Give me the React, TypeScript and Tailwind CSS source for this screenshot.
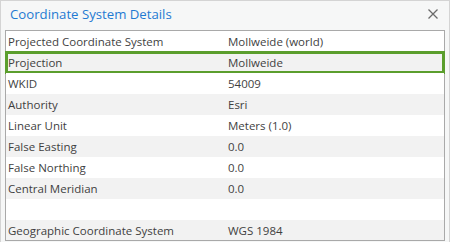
import React from 'react';

const rows: [string, string][] = [
  ['Projected Coordinate System', 'Mollweide (world)'],
  ['Projection', 'Mollweide'],
  ['WKID', '54009'],
  ['Authority', 'Esri'],
  ['Linear Unit', 'Meters (1.0)'],
  ['False Easting', '0.0'],
  ['False Northing', '0.0'],
  ['Central Meridian', '0.0'],
  ['', ''],
  ['Geographic Coordinate System', 'WGS 1984'],
];

export default function App() {
  return (
    <div className="w-[450px] h-[242px] overflow-hidden bg-[#f6f7f7] border-l border-r border-t border-[#d4d4d4] flex flex-col" style={{ fontFamily: '"Open Sans", "Noto Sans", sans-serif' }}>
      {/* Title bar */}
      <div className="h-[29px] flex items-center justify-between pl-[9px] pr-[11px]">
        <span className="text-[13.2px] text-[#1f7ad2] leading-none -mt-[1px]">Coordinate System Details</span>
        <svg width="10" height="10" viewBox="0 0 10 10" className="text-[#6b6b6b] -mt-[3px]">
          <path d="M0.5 0.5 L9.5 9.5 M9.5 0.5 L0.5 9.5" stroke="currentColor" strokeWidth="1.3" />
        </svg>
      </div>

      {/* Details table */}
      <div className="mx-[4px] border border-[#a9a9a9] bg-white">
        {rows.map(([label, value], i) => (
          <div key={i} className={`relative grid grid-cols-[222px_1fr] items-center pt-[1px] ${i === rows.length - 1 ? 'h-[20px]' : 'h-[21px]'} ${i % 2 === 1 ? 'bg-[#f2f2f2]' : 'bg-white'} text-[11.5px] text-[#3f3f3f]`}>
            <span className="pl-[2px] whitespace-nowrap">{label}</span>
            <span className="whitespace-nowrap">{value}</span>
            {i === 1 && (
              <div className="absolute top-[-1px] bottom-[-1px] left-[-1px] right-[-1px] border-[3px] border-[#5b9e2d] pointer-events-none" />
            )}
          </div>
        ))}
      </div>
    </div>
  );
}
